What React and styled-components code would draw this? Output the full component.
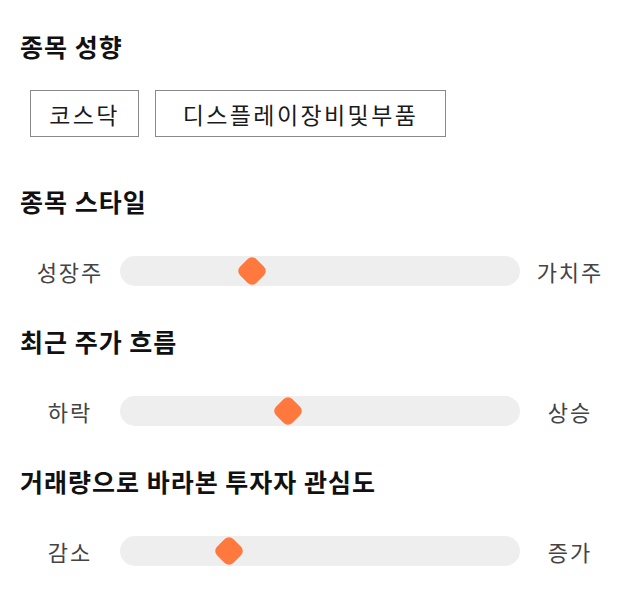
import React from 'react';
import styled, { createGlobalStyle } from 'styled-components';

const GlobalStyle = createGlobalStyle`
    body {
        margin: 0;
        background: #ffffff;
        font-family: "Noto Sans CJK KR", "Noto Sans", sans-serif;
    }
`;

const Page = styled.div`
    display: flex;
    flex-direction: column;
    gap: 40px;
    padding: 30px 20px;
`;

const Section = styled.section`
    display: flex;
    flex-direction: column;
    margin-bottom: ${props => props.extra || 0}px;
`;

const Title = styled.h2`
    margin: 0 0 28px;
    font-size: 25px;
    line-height: 32px;
    letter-spacing: 1px;
    font-weight: bold;
    color: #111;
`;

const ChipRow = styled.div`
    display: flex;
    gap: 16px;
    padding-left: 10px;
`;

const Chip = styled.div`
    width: ${props => props.width}px;
    height: 47px;
    box-sizing: border-box;
    display: flex;
    align-items: center;
    justify-content: center;
    border: 1px solid #8a8a8a;
    font-size: 23px;
    letter-spacing: 2.4px;
    color: #1a1a1a;
`;

const SliderRow = styled.div`
    display: grid;
    grid-template-columns: 100px 1fr 100px;
    align-items: center;
    margin-top: 10px;
    height: 30px;
`;

const Label = styled.div`
    text-align: center;
    font-size: 22px;
    letter-spacing: 2px;
    color: #444;
`;

const Track = styled.div`
    position: relative;
    height: 30px;
    border-radius: 15px;
    background: #eeeeee;
`;

const Thumb = styled.div`
    position: absolute;
    top: 50%;
    width: 23px;
    height: 23px;
    border-radius: 6px;
    background: #ff783e;
    transform: translate(-50%, -50%) rotate(45deg);
`;

const sections = [
    { title: '종목 스타일', left: '성장주', right: '가치주', value: 0.33 },
    { title: '최근 주가 흐름', left: '하락', right: '상승', value: 0.42 },
    { title: '거래량으로 바라본 투자자 관심도', left: '감소', right: '증가', value: 0.2725 },
];

function Slider({ left, right, value }) {
    return (
        <SliderRow>
            <Label>{left}</Label>
            <Track>
                <Thumb style={{ left: `${value * 100}%` }} />
            </Track>
            <Label>{right}</Label>
        </SliderRow>
    );
}

export default function App() {
    return (
        <Page>
            <GlobalStyle />
            <Section extra={8}>
                <Title>종목 성향</Title>
                <ChipRow>
                    <Chip width={109}>코스닥</Chip>
                    <Chip width={291}>디스플레이장비및부품</Chip>
                </ChipRow>
            </Section>

            {sections.map(s => (
                <Section key={s.title}>
                    <Title>{s.title}</Title>
                    <Slider left={s.left} right={s.right} value={s.value} />
                </Section>
            ))}
        </Page>
    );
}
